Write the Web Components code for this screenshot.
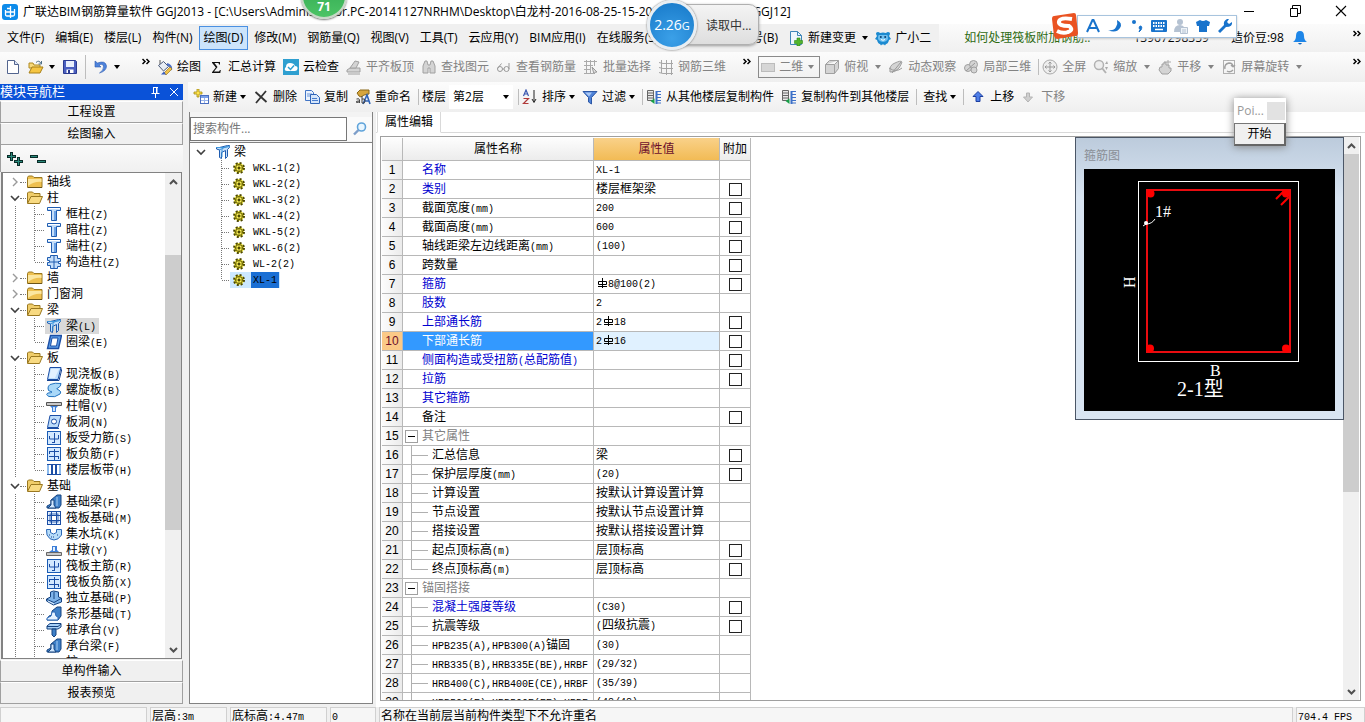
<!DOCTYPE html>
<html lang="zh-CN">
<head>
<meta charset="utf-8">
<title>广联达BIM钢筋算量软件 GGJ2013</title>
<style>
html,body{margin:0;height:100%;overflow:hidden;background:#f0f0f0}
body{font:12px/16px "Open Sans","Noto Sans CJK SC",sans-serif;color:#000;
--ui:"Open Sans","Noto Sans CJK SC",sans-serif;--song:"Liberation Mono","Noto Sans CJK SC",monospace}
</style>
</head>
<body>
<ggj-app></ggj-app>
<script>
const define=(name,css,html)=>customElements.define(name,class extends HTMLElement{
  connectedCallback(){
    if(this.shadowRoot)return;
    this.attachShadow({mode:'open'}).innerHTML=`<style>*{box-sizing:border-box}.m{font-size:10px}${css}</style>${typeof html==='function'?html(this):html}`;
  }
});
/* half-width runs are set at 10px so that each one takes half a CJK cell */
const half=s=>s.replace(/[\x20-\x7e]+/g,m=>`<span class="m">${m}</span>`);

/* ---------- icon set, 16 x 16 grid ---------- */
const B='fill="#c4defa" stroke="#1f5cb0"', G='fill="#d4d4d4" stroke="#a0a0a0"';
const ICONS={
app:'<rect width="16" height="16" rx="3" fill="#0d8bea"/><path d="M8.500 2v12M3 8h10M5 4.500h4M12.500 5v5.500q0 1.500-1.500 1.500H5q-1.500 0-1.500-1.500V6" fill="none" stroke="#fff" stroke-width="1.300"/>',
file:'<path d="M2.500 1.500h7l4 4v9h-11z" fill="#fff" stroke="#53658f"/><path d="M9.500 1.500v4h4" fill="#dde6f8" stroke="#53658f"/>',
open:'<path d="M1 4h4l1 2h6v3H1z" fill="#f7d97a" stroke="#b08a20"/><path d="M1 14l3-6h11l-3 6z" fill="#f5c542" stroke="#a88018"/><path d="M8 3.500q3-3 5 1m.5-2.500v3h-3" fill="none" stroke="#4f7088"/>',
save:'<path d="M1.500 1.500h12l1 1v12h-13z" fill="#4a5fc0" stroke="#2b3a90"/><path d="M4 2h8v6H4z" fill="#e8eefc"/><path d="M4.500 10.500h7V14h-7z" fill="#fff"/><path d="M6 11h2v3H6z" fill="#2b3a90"/>',
undo:'<path d="M2 2v6h6L6 6q4-2 4.500 1.500Q11 11 6.500 14q7-2 7-7Q12.500 1 4.500 4z" fill="#4d83dc" stroke="#2d5bb0" stroke-width=".6"/>',
paint:'<path d="M3 1v5" stroke="#555"/><path d="M1.500 6.500l5-4 5 5-5 4.500z" fill="#e8edf5" stroke="#4c5a78"/><path d="M10 5q5 2 4 6" fill="none" stroke="#4c6fc5" stroke-width="2"/><path d="M7 14l6-6 2 2-6 6z" fill="#f0c24a" stroke="#9a7620" stroke-width=".7"/><path d="M4 15.500l3-3 2 3z" fill="#3b5fc0"/>',
sum:'<path d="M4 3h8v2.500h-1L10.500 4H6.500l3 4-3.500 4.500h5L12 11h.8l-.5 3H4v-.8L7.800 8.500 4 3.800z" fill="#111"/>',
cloud:'<rect width="16" height="16" fill="#2e9fd0"/><path d="M4 12q-3 0-2-3l1-1q0-4 4-4t5 3q3 0 2.500 3-.5 2-2.500 2z" fill="#fff"/><path d="M5 8l2.500 2.500L11 6.500" fill="none" stroke="#2e9fd0" stroke-width="1.500"/>',
slab:`<path d="M1 11l3-2h10v4H1z" ${G}/><path d="M4 9l5-7 4 1-3 6z" ${G}/><path d="M2 15h12" stroke="#a0a0a0"/>`,
find:`<path d="M2 7l2-5h2l1 4h2l1-4h2l2 5v7h-5V9H7v5H2z" ${G}/>`,
glasses:'<circle cx="4" cy="10" r="2.500" fill="none" stroke="#999"/><circle cx="10.500" cy="10" r="2.500" fill="none" stroke="#999"/><path d="M6.500 10h1.500M1.500 9.500l4-5M13 10V4" stroke="#999"/>',
batch:'<path d="M1 2.500h13M1 6.500h9M1 10.500h7M1 14.500h9M3.500 1v14M7.500 1v14M11.500 1v6" stroke="#aaa"/><path d="M9 8l5 5-2 .2L11 15z" fill="#ddd" stroke="#999"/>',
rebar3d:'<path d="M1 3.500l4 1h10M1 8.500l4 1h10M1 13.500l4 1h10M3.500 1v13M8.500 1v15M13.500 1v15" fill="none" stroke="#a6a6a6"/>',
flat:'<rect x="1.500" y="4.500" width="13" height="8" fill="#d6d6d6" stroke="#bcbcbc"/>',
cube:`<path d="M1.500 5.500l4-4h9v8l-4 5h-9zM1.500 5.500h9l4-4M10.500 5.500v9" ${G}/>`,
orbit:`<path d="M2 13Q1 6 7 4q6-3 7-1-1 3-3 6-4 5-9 4z" ${G}/><path d="M1 9q7 5 13 0M4 14L13 3" fill="none" stroke="#999"/>`,
part:`<circle cx="5" cy="9" r="3.500" ${G}/><circle cx="10.500" cy="5.500" r="4" ${G}/><circle cx="11" cy="11" r="3" ${G}/><path d="M3 12l9-8" stroke="#999"/>`,
full:'<circle cx="8" cy="8" r="7" fill="#eee" stroke="#aaa"/><path d="M8 3v10M3 8h10M6.500 4.500L8 3l1.500 1.500M6.500 11.500L8 13l1.500-1.500M4.500 6.500L3 8l1.500 1.500M11.500 6.500L13 8l-1.500 1.500" fill="none" stroke="#999"/>',
zoomi:'<circle cx="6" cy="6" r="4.500" fill="#eee" stroke="#b2b2b2" stroke-width="1.500"/><path d="M9 9l4 5" stroke="#b2b2b2" stroke-width="2"/><path d="M14 2l-2 3h3zM12 8h3l-1.500 3z" fill="#aaa"/>',
hand:`<path d="M3 8h2V5h2V3h2v3h3v3h2v3l-3 3H5l-3-4z" ${G}/><path d="M11 1v5M9 3h5" stroke="#aaa"/>`,
rotate:'<rect x="2.500" y="1.500" width="11" height="13" fill="none" stroke="#b0b0b0"/><path d="M4 10q-1-5 4-6 4 0 4 4m0 0l-2-2m2 2l2-2M12 11q-3 3-6 1" fill="none" stroke="#a0a0a0" stroke-width="1.400"/>',
add:'<path d="M4 0h2v3h3v2H6v3H4V5H1V3h3z" fill="#ffe34d" stroke="#a38a10" stroke-width=".8"/><rect x="7.500" y="6.500" width="8" height="8" fill="#fff" stroke="#4a6ec0"/><path d="M8 7h7v2H8z" fill="#7aa0ea"/><path d="M8 11.500h7M11.500 9v5" stroke="#9bb5ea"/>',
del:'<path d="M2.500 3l11 10M13 2L3 14" stroke="#333" stroke-width="1.800"/>',
copy:'<path d="M1.500 1.500h6l2 2v8h-8z" fill="#eaf2fd" stroke="#4275c5"/><path d="M3 5h5M3 7h5" stroke="#6d97d8"/><path d="M6.500 5.500h6l3 3v6h-9z" fill="#d5e6fb" stroke="#2f64b8"/><path d="M8 9.500h5M8 11.500h6" stroke="#4a7dcc"/>',
rename:'<path d="M2 4l3-3h9v4l-5 1-3 2-2-1z" fill="#d6a53c" stroke="#8a6818"/><path d="M8 15l4-9 3 9m-5-3h4" fill="none" stroke="#2f64b8" stroke-width="1.600"/><path d="M1.500 10q3-1 3 1v3M4 12q-3 0-3 1t3 0M7 7v7M7 10q3-1 3 2t-3 2" fill="none" stroke="#444"/>',
sort:'<path d="M1.500 7L4 1l2.500 6M2.500 5h3" fill="none" stroke="#3a57b0" stroke-width="1.200"/><path d="M1.500 9.500h5l-5 5h5" fill="none" stroke="#b03a3a" stroke-width="1.200"/><path d="M12 1v12m-2-3l2 3.500 2-3.500" fill="none" stroke="#222"/>',
filter:'<path d="M1 2.500h14l-5.500 6V15l-3-2V8.500z" fill="#4f83d8" stroke="#2c57a5"/><path d="M3 3.500h7l-3 4z" fill="#a9c8f5"/>',
from:'<path d="M1.500 1.500h6v10h-6z" fill="#e8e8e8" stroke="#666"/><path d="M2 4h5M2 6.500h5M2 9h5" stroke="#666"/><path d="M11 2.500h4M11 5.500h4M11 8.500h4M11 11.500h4M11 14h4" stroke="#3d70c8"/><path d="M10.500 2v13" stroke="#3d70c8" stroke-width="2"/><path d="M8.500 9.500v5.500L4.500 12z" fill="#18a048"/>',
up:'<path d="M8 2.500l5 5h-3v5H6v-5H3z" fill="#4f7fe8" stroke="#1d3fa0"/>',
down:'<path d="M7 13l-4.500-5h3V4h3v4h3z" fill="#cfcfcf" stroke="#b4b4b4"/>',
change:'<path d="M2.500 1.500h7l4 4v9h-11z" fill="#eef6fc" stroke="#3e85b8"/><path d="M9.500 1.500v4h4" fill="none" stroke="#3e85b8"/><path d="M9 8h3v2.500h2.500v3H12V16H9v-2.500H6.500v-3H9z" fill="#52b52c" stroke="#2d8a18" stroke-width=".6"/>',
robot:'<path d="M1 3q2-2 4 0 3-1 6 0 2-2 4 0 0 2-1 3l2 3-2 1q-1 4-3 4l-1 1.500-1-1H7l-1 1L5 14q-2 0-3-4L0 9l2-3Q1 5 1 3z" fill="#1c8ad0"/><path d="M4 5h8q1 0 1 3t-5 4q-5-1-5-4 0-3 1-3z" fill="#6fc0f0"/><circle cx="5.800" cy="7" r="1" fill="#0b3f70"/><circle cx="10.200" cy="7" r="1" fill="#0b3f70"/><path d="M6 9.500q2 1.500 4 0" fill="none" stroke="#fff"/>',
bell:'<path d="M8 1q4 0 4 5 0 4 3 6H1q3-2 3-6 0-5 4-5z" fill="#1e86e8"/><path d="M6 13h4q-2 3-4 0z" fill="#1669bd"/>',
folder:'<path d="M.5 3.500l1-1.500h4l1.500 1.500h8v10H.5z" fill="#eec050" stroke="#9a7820"/><path d="M1 5h13.500v3Q8 7 1 12z" fill="#fbe6a0"/><path d="M1 13.500h14" stroke="#6b5418"/>',
folderopen:'<path d="M.5 13V3l1-1h4l1.500 1.500h6V6" fill="#f0cd6a" stroke="#9a7820"/><path d="M.5 13.500L4 6.500h11.500l-3 7z" fill="#f8da82" stroke="#9a7820"/>',
col:`<path d="M1.500 1.500h13v3h-4v10h-5v-10h-4z" ${B}/><path d="M2 2h12v1H2z" fill="#fff"/><path d="M9 5v9" stroke="#6ba2e6" stroke-width="2"/>`,
gcol:`<path d="M4.500 1.500h7v3h3v3h-2v2h2v3h-3v2h-7v-3h-3v-3h2v-2h-2v-3h3z" ${B}/><path d="M8 2v12M4 8h9" stroke="#1f5cb0"/>`,
beam:`<path d="M1.500 3.500h3l8-2h2v2l-2 2v7l-2 2v-8l-4 2v6l-2-1V6l-3-1z" ${B}/><path d="M1 3.500h8l6-1M4 6l9-4M7 5v8" fill="none" stroke="#3e96dc"/>`,
ring:'<path d="M4.500 1.500h11l-3 13h-11z" fill="#5a9be6" stroke="#1b4ea5" stroke-width="1.400"/><path d="M6 4h6l-1.500 8H4.500z" fill="#fff" stroke="#1b4ea5"/>',
plate:'<path d="M4 1.500h11l-3 12H1.500z" fill="#bcdcfb" stroke="#1b4ea5"/><path d="M1 14.500h12l3-12" fill="none" stroke="#14408e"/><path d="M5 3h8L9 12H3z" fill="#e3f1ff"/>',
spiral:'<path d="M4 2.500q5-2 11-1 0 3-3 4.500-3 1 1 2 3 2 1 4-5 4-11 2.500-4-2-1-3.500 3 0 4-1-5-1-4-4 0-2 2-3.500z" fill="#a9d8f8" stroke="#2373c0"/>',
cap:'<path d="M.5 4.500h15v3H.5z" fill="#c8c8c8" stroke="#555"/><path d="M4 8h8l-2 2v4H6v-4z" fill="#3d7fd8"/><path d="M7 9h2v4H7z" fill="#cde4ff"/>',
hole:'<path d="M4 1.500h11l-3 12H1.500z" fill="#bcdcfb" stroke="#1b4ea5"/><circle cx="8" cy="7.500" r="2.500" fill="#fff" stroke="#1b4ea5"/><path d="M1 14.500h12" stroke="#1b4ea5"/>',
force:'<rect x="1.500" y="1.500" width="13" height="13" fill="#d3e9ff" stroke="#1b5cb5"/><path d="M8.500 3v10M3.500 6v3h9V5M6 12.500h3" fill="none" stroke="#1b4ea5"/>',
neg:'<rect x="1.500" y="1.500" width="13" height="13" fill="#d3e9ff" stroke="#1b5cb5"/><path d="M8.500 3v11M3 5.500h10M3 10.500h10M3.500 5v3M12.500 10v3" fill="none" stroke="#1b4ea5"/>',
band:'<path d="M1 2.500h14M1 12.500h14" stroke="#1b4ea5"/><path d="M2 3v9M14 3v9" stroke="#8dbbee" stroke-width="2"/><path d="M6 3v9M10 3v9" stroke="#1b4ea5" stroke-width="2"/>',
fbeam:'<path d="M1 12l4-2V6l6-5h4v10l-2 3H1z" fill="#3e80c8" stroke="#15427f"/><path d="M5 6h3v5l2 3H2l3-3z" fill="#d3e9ff" stroke="#15427f"/><path d="M11 3v9" stroke="#a8d0f7"/>',
raft:'<rect x="1.500" y="1.500" width="13" height="13" fill="#e0efff" stroke="#1b4ea5"/><path d="M5.500 1v14M10.500 1v14M1 5.500h14M1 10.500h14" stroke="#1b4ea5"/><rect x="4" y="4" width="8" height="8" fill="none" stroke="#1b4ea5" stroke-width=".8"/><path d="M6 6h4v4H6z" fill="#fff"/>',
pit:'<path d="M.5 3.500h4v3q3 3 6 0v-3h5V9q-3 5-7.500 5T1 9z" fill="#b7ddfa" stroke="#2a68b8"/><path d="M3 9h1m3 2h1m3-2h1M5 11h1" stroke="#14408e"/>',
pier:'<path d="M.5 10.500h15v3H.5z" fill="#c8c8c8" stroke="#666"/><path d="M3 10l3-2V4h5v4l2 2z" fill="#3d7fd8"/><path d="M7 5h2v4H7z" fill="#e4f1ff"/>',
foot:'<path d="M.5 9l4-2V2l3-1 5 1v5l3 1v4l-8 3-7-4z" fill="#7fb4ea" stroke="#15427f"/><path d="M1 9.500l7 3 7-4M8 2v7" fill="none" stroke="#15427f"/><path d="M2 11l6 3" stroke="#e4f1ff"/>',
strip:'<path d="M1 14l2-4 3-1V5l5-4h4v9l-3 4z" fill="#3e80c8" stroke="#15427f"/><path d="M6 6h3l1 4 2 1v3H1v-2l4-2z" fill="#e4f1ff" stroke="#2a68b8"/>',
pile:'<path d="M1 4l3-2.500h11V5l-3 2H1z" fill="#a8d0f7" stroke="#15427f"/><path d="M6 7h4v6l-2 2-2-2z" fill="#3e80c8" stroke="#15427f"/><path d="M1 4.500h11L15 2" fill="none" stroke="#15427f"/>',
gear:'<circle cx="8" cy="8" r="5" fill="#f4ec3c" stroke="#4c4700" stroke-width="2" stroke-dasharray="2 1.927"/><circle cx="8" cy="8" r="3.500" fill="#fff45a" stroke="#5a5400"/><path d="M5 8h6M8 5v6" stroke="#5a5400" stroke-width=".7"/><circle cx="8" cy="8" r="1.200" fill="#4c4700"/>',
search:'<circle cx="9.500" cy="6" r="4" fill="#e9f6ff" stroke="#5fa3da" stroke-width="1.600"/><path d="M6.500 9L2 13.500" stroke="#7d9ec9" stroke-width="2.400"/>',
expand:'<path d="M0 5.500h9M4.500 1v9M7 10.500h9M11.500 6v9" stroke="#0a2c28" stroke-width="3"/><path d="M1 5.500h7M4.500 2v7M8 10.500h7M11.500 7v7" stroke="#2a8a7c"/>',
collapse:'<path d="M0 5.500h8M7 10.500h9" stroke="#0a2c28" stroke-width="3"/><path d="M1 5.500h6M8 10.500h7" stroke="#2a8a7c"/>',
pin:'<path d="M5 3.500h5M5.500 4v5M9 4v5M3.500 9.500h8M7.500 10v4" stroke="#fff" fill="none"/><path d="M8.500 4v5" stroke="#fff"/>',
x:'<path d="M4 4l8 8M12 4l-8 8" stroke="#fff"/>',
min:'<path d="M3 8.500h10" stroke="#000"/>',
restore:'<path d="M3.500 5.500h7v8h-7zM5.500 5v-2.500h8v8H11" fill="none" stroke="#000"/>',
close:'<path d="M3 3l10 10M13 3L3 13" stroke="#000" stroke-width="1.100"/>',
sogouA:'<path d="M2 14L7.500 2h1L14 14M4 10h8" fill="none" stroke="#1873cc" stroke-width="2"/>',
moon:'<path d="M10 2q6 3 3 8-4 6-12 2 6 1 8-3 2-3 1-7z" fill="#1873cc"/>',
comma:'<circle cx="5" cy="4" r="2" fill="#1873cc"/><path d="M11 8q3 0 1 4l-2 2q2-3 0-4z" fill="#1873cc" stroke="#1873cc"/>',
keys:'<rect y="2" width="16" height="12" rx="1" fill="#1873cc"/><path d="M2 5h12M2 8h12" stroke="#fff" stroke-width="2" stroke-dasharray="1.500 1"/><path d="M4 11.500h8" stroke="#fff" stroke-width="1.500"/>',
person:'<circle cx="7" cy="4" r="3" fill="#b5c2d2"/><path d="M1 14q0-7 6-7 3 0 5 3v4z" fill="#b5c2d2"/><path d="M7.500 9.500h7v6h-7z" fill="#eef3f8" stroke="#b5c2d2"/><path d="M9 12h4M9 14h4" stroke="#b5c2d2"/>',
shirt:'<path d="M1 4l4-2q3 2 6 0l4 2-1 4h-2v6H4V8H2z" fill="#1873cc"/>',
wrench:'<path d="M3 15l-2-2 6-6q-1-4 3-6l2 0-2 3 2 2 3-2q1 5-6 5z" fill="#1873cc"/>'
};
define('ui-icon',':host{display:block;flex:none;width:16px;height:16px}svg{display:block;width:100%;height:100%}',
 e=>`<svg viewBox="0 0 16 16" aria-hidden="true">${ICONS[e.getAttribute('name')]||''}</svg>`);
define('drop-arrow',':host{display:block;flex:none;width:6px;height:4px}svg{display:block}','<svg width="6" height="4" aria-hidden="true"><path d="M0 0h6L3 4z" fill="currentColor"/></svg>');
define('more-mark',':host{display:block;flex:none;width:8px;height:7px;align-self:flex-start;margin-top:6px}svg{display:block}','<svg width="8" height="7" aria-hidden="true"><path d="M.5 1L3 3.500.5 6M4.500 1L7 3.500 4.500 6" fill="none" stroke="#000" stroke-width="1.500"/></svg>');
define('tool-sep',':host{display:block;flex:none;width:1px;height:16px;background:#bdbdbd}','');

define('tool-button',`:host{display:block;flex:none}
button{display:flex;align-items:center;gap:4px;border:0;padding:0;margin:0;background:none;font:12px/20px var(--ui);color:#000;white-space:nowrap}
button:disabled{color:#838383}drop-arrow{margin-left:var(--arrow,-1px)}`,
e=>{const i=e.getAttribute('icon'),l=e.getAttribute('label')||'';
return `<button ${e.hasAttribute('off')?'disabled':''} aria-label="${l||e.getAttribute('hint')}">${i?`<ui-icon name="${i}"></ui-icon>`:''}${l?`<span>${l}</span>`:''}${e.hasAttribute('menu')?'<drop-arrow></drop-arrow>':''}</button>`});

define('scroll-bar',`:host{display:flex;flex-direction:column;flex:none;width:16px;background:#f0f0f0}
.arrow{height:17px;flex:none;display:flex;align-items:center;justify-content:center}
.thumb{background:#cdcdcd}`,
e=>{const [a,b,c]=e.getAttribute('parts').split(' ');
const arrow=d=>`<div class="arrow"><svg width="9" height="6"><path d="${d}" fill="none" stroke="#505050" stroke-width="2"/></svg></div>`;
return `${arrow('M1 5l3.500-3.500L8 5')}<div style="flex:${a} 0 0"></div><div class="thumb" style="flex:${b} 0 0"></div><div style="flex:${c} 0 0"></div>${arrow('M1 1l3.500 3.500L8 1')}`});

/* ---------- window chrome ---------- */
define('title-bar',`:host{display:flex;align-items:center;height:24px;flex:none;background:#fff;padding:0 16px 0 2px;white-space:nowrap}
h1{font:12px/16px var(--ui);margin:0 auto 0 5px}
.win{display:flex;gap:30px;margin-bottom:3px}button{border:0;padding:0;background:none}`,
`<ui-icon name="app"></ui-icon><h1>广联达BIM钢筋算量软件 GGJ2013 - [C:\\Users\\Administrator.PC-20141127NRHM\\Desktop\\白龙村-2016-08-25-15-20-10-32 (2016钢筋).GGJ12]</h1>
<div class="win"><button aria-label="最小化"><ui-icon name="min"></ui-icon></button><button aria-label="还原"><ui-icon name="restore"></ui-icon></button><button aria-label="关闭"><ui-icon name="close"></ui-icon></button></div>`);

const MENUS=['文件(F)','编辑(E)','楼层(L)','构件(N)','绘图(D)','修改(M)','钢筋量(Q)','视图(V)','工具(T)','云应用(Y)','BIM应用(I)','在线服务(S)','帮助(H)','版本号(B)'];
define('menu-bar',`:host{display:flex;align-items:center;height:28px;flex:none;background:#f0f0f0;padding-left:2px}
nav{display:flex;gap:1px}nav button{border:1px solid transparent;background:none;padding:0 4px;height:24px;font:12px/20px var(--ui);white-space:nowrap;color:#000}
nav button.on{background:#cce4fb;border-color:#4a90e2}nav button:last-child{margin-left:7px}
tool-button{margin-left:5px;--arrow:2px}tool-button+tool-button{margin-left:7px}
.info{flex:1;display:flex;align-items:center;align-self:stretch;margin-left:8px;padding:0 4px 0 25px;background:linear-gradient(#fbfbfb,#f0f0f0);white-space:nowrap}
a{color:#2e6b12;text-decoration:none}.tel{margin-left:43px}.bean{margin-left:22px}.info ui-icon{margin-left:8px}more-mark{margin-left:auto}`,
`<nav>${MENUS.map(m=>`<button${m=='绘图(D)'?' class="on"':''}>${m}</button>`).join('')}</nav>
<tool-button icon="change" label="新建变更" menu></tool-button><tool-button icon="robot" label="广小二"></tool-button>
<div class="info"><a href="#">如何处理筏板附加钢筋..</a><span class="tel">13967298359</span><span class="bean">造价豆:98</span><ui-icon name="bell"></ui-icon><more-mark></more-mark></div>`);

const tb=(icon,label,o='off')=>`<tool-button ${icon?`icon="${icon}"`:''} label="${label}" ${o}></tool-button>`;
define('main-tools',`:host{display:flex;align-items:center;gap:7px;height:30px;flex:none;padding:0 4px 0 5px;background:linear-gradient(#fcfcfc,#efefef);--arrow:3px}
.std{display:flex;align-items:center;gap:7px;width:145px;--arrow:1px}
.std more-mark{margin-left:auto}.std,.view{align-self:stretch}
.view{display:flex;align-items:center;margin:0 -3px 0 0}
.box{display:flex;align-items:center;border:1px solid #8a8a8a;height:22px;width:62px;padding:0 5px 0 1px;color:#838383}
select{appearance:none;border:0;background:none;padding:0;margin:0 auto 0 3px;font:12px/18px var(--ui);color:#838383;width:26px}
.more{margin:6px 0 0 10px}.last{margin-left:auto}tool-sep{margin-right:-4px}.std tool-sep{height:24px;margin:0}`,
`<div class="std"><tool-button icon="file" hint="新建"></tool-button><tool-button icon="open" hint="打开" menu></tool-button><tool-button icon="save" hint="保存"></tool-button><tool-sep></tool-sep><tool-button icon="undo" hint="撤销" menu></tool-button><more-mark></more-mark></div>
${tb('paint','绘图','')}${tb('sum','汇总计算','')}${tb('cloud','云检查','')}${tb('slab','平齐板顶')}${tb('find','查找图元')}${tb('glasses','查看钢筋量')}${tb('batch','批量选择')}${tb('rebar3d','钢筋三维')}
<more-mark class="more"></more-mark><div class="view"><div class="box"><ui-icon name="flat"></ui-icon><select aria-label="视图模式"><option>二维</option></select><drop-arrow></drop-arrow></div></div>
${tb('cube','俯视','off menu')}${tb('orbit','动态观察')}${tb('part','局部三维')}<tool-sep></tool-sep>${tb('full','全屏')}${tb('zoomi','缩放','off menu')}${tb('hand','平移','off menu')}${tb('rotate','屏幕旋转','off menu')}<more-mark class="last"></more-mark>`);

define('edit-tools',`:host{display:flex;align-items:center;gap:7px;height:30px;flex:none;padding-left:5px;background:linear-gradient(#fcfcfc,#efefef)}
tool-sep{margin-right:-4px}.wide{margin-right:-1px}label{margin-right:-4px;white-space:nowrap}
.box{display:flex;align-items:center;width:64px;height:24px;background:#fff;padding:0 4px;margin-right:-2px}
select{appearance:none;border:0;background:none;padding:0;font:12px/20px var(--ui);flex:1;min-width:0}`,
`${tb('add','新建','menu')}${tb('del','删除','')}${tb('copy','复制','')}${tb('rename','重命名','')}<tool-sep></tool-sep><label for="f">楼层</label><div class="box"><select id="f"><option>第2层</option></select><drop-arrow></drop-arrow></div>
<tool-sep></tool-sep>${tb('sort','排序','menu')}${tb('filter','过滤','menu')}<tool-sep></tool-sep>${tb('from','从其他楼层复制构件','')}${tb('from','复制构件到其他楼层','')}<tool-sep class="wide"></tool-sep>${tb('','查找','menu')}<tool-sep class="wide"></tool-sep>${tb('up','上移','')}${tb('down','下移')}`);

/* ---------- left navigation ---------- */
const CHEV={open:'<svg width="10" height="16"><path d="M1 6l4 4 4-4" fill="none" stroke="#404040" stroke-width="1.600"/></svg>',shut:'<svg width="10" height="16"><path d="M3 4l4 4-4 4" fill="none" stroke="#9a9a9a" stroke-width="1.400"/></svg>'};
const NAV=[['轴线'],['柱',['col','框柱(Z)'],['col','暗柱(Z)'],['col','端柱(Z)'],['gcol','构造柱(Z)']],['墙'],['门窗洞'],
['梁',['beam','梁(L)'],['ring','圈梁(E)']],
['板',['plate','现浇板(B)'],['spiral','螺旋板(B)'],['cap','柱帽(V)'],['hole','板洞(N)'],['force','板受力筋(S)'],['neg','板负筋(F)'],['band','楼层板带(H)']],
['基础',['fbeam','基础梁(F)'],['raft','筏板基础(M)'],['pit','集水坑(K)'],['pier','柱墩(Y)'],['force','筏板主筋(R)'],['neg','筏板负筋(X)'],['foot','独立基础(P)'],['strip','条形基础(T)'],['pile','桩承台(V)'],['fbeam','承台梁(F)'],['pier','桩(U)']]];
const navRows=NAV.map(([t,...k])=>`<li role="treeitem" class="g">${k.length?CHEV.open:CHEV.shut}<i></i><ui-icon name="${k.length?'folderopen':'folder'}"></ui-icon><span>${t}</span></li>`+
k.map(([ic,n],j)=>`<li role="treeitem"><svg class="guide" width="42" height="16"><path d="M12.500 0v16M31.500 0v${j==k.length-1&&n!='桩(U)'?8:16}M32 8.500h10" stroke="#777" stroke-dasharray="1 1"/></svg><div class="${n=='梁(L)'?'sel':'it'}"><ui-icon name="${ic}"></ui-icon><div class="t">${half(n)}</div></div></li>`).join('')).join('');
define('module-nav',`:host{display:flex;flex-direction:column;width:184px;flex:none;padding:2px 1px 3px 0}
header{display:flex;align-items:center;height:16px;flex:none;background:#0a52d8;color:#fff;font:13px/18px var(--song);margin-bottom:1px}
h2{font:inherit;margin:0 auto 0 0;padding-top:1px}header ui-icon+ui-icon{margin:0 1px 0 2px}
.sec{height:22px;flex:none;border:1px solid #a0a0a0;border-top-color:#fff;background:#f0f0f0;font:12px/18px var(--song);padding:2px 0 0;color:#000}
.acts{display:flex;align-items:center;gap:7px;height:27px;flex:none;padding-left:6px;background:linear-gradient(#fafafa,#f0f0f0);border-left:1px solid #a0a0a0}
.acts button{border:0;background:none;padding:0;display:block}
.tree{flex:1;min-height:0;display:flex;border:1px solid #828282;margin-right:1px;background:#fff;border-left-width:2px;margin-left:1px;margin-bottom:1px}
ul{list-style:none;margin:0;padding:1px 0 0;flex:1;min-width:0;overflow:hidden;font:12px/18px var(--song)}
li{display:flex;align-items:center;height:16px;white-space:nowrap}.g>svg{margin-left:7px}.g i{width:6px;border-top:1px dotted #777;margin-right:1px}.g>span{margin-left:4px;height:16px}
.it,.sel{display:flex;height:16px;padding:0 3px 0 1px}.sel{background:#d9d9d9}.t{margin-left:4px}svg{display:block;flex:none}`,
`<header><h2>模块导航栏</h2><ui-icon name="pin"></ui-icon><ui-icon name="x"></ui-icon></header>
<button class="sec">工程设置</button><button class="sec">绘图输入</button>
<div class="acts"><button aria-label="全部展开"><ui-icon name="expand"></ui-icon></button><button aria-label="全部折叠"><ui-icon name="collapse"></ui-icon></button></div>
<div class="tree"><ul role="tree">${navRows}</ul><scroll-bar parts="65 276 111"></scroll-bar></div>
<button class="sec">单构件输入</button><button class="sec">报表预览</button>`);

/* ---------- component list ---------- */
const PARTS=['WKL-1(2)','WKL-2(2)','WKL-3(2)','WKL-4(2)','WKL-5(2)','WKL-6(2)','WL-2(2)','XL-1'];
define('component-list',`:host{display:flex;flex-direction:column;width:184px;flex:none;border:1px solid #828282;border-top:0;margin-bottom:3px;margin-left:1px;background:#fff}
form{display:flex;height:31px;flex:none;padding:5px 0 1px;background:#f3f3f3;border-bottom:1px solid #828282}
input{flex:1;min-width:0;border:1px solid #777;padding:0 2px;font:12px/16px var(--ui);color:#000;background:#fff}input::placeholder{color:#777}
form button{width:25px;border:0;padding:0 0 0 5px;background:#fafafa}
ul{list-style:none;margin:0;padding:1px 0 0;font:12px/18px var(--song)}li{display:flex;height:16px;align-items:center}svg{display:block;flex:none}
.root svg{margin:0 9px 0 6px}.root span{margin-left:3px;height:16px}li b{font-weight:400;margin-left:4px;padding:0 2px;height:16px}
.box{display:flex;padding:0 1px}.sel{background:#cce8ff}.sel b{background:#1a6fd4}`,
`<form><input placeholder="搜索构件..." aria-label="搜索构件"><button type="button" aria-label="搜索"><ui-icon name="search"></ui-icon></button></form>
<ul role="tree"><li class="root" role="treeitem">${CHEV.open}<ui-icon name="beam"></ui-icon><span>梁</span></li>${PARTS.map((p,i)=>`<li role="treeitem"><svg width="40" height="16"><path d="M31.500 0v${i==7?8:16}M32 8.500h8" stroke="#777" stroke-dasharray="1 1"/></svg><div class="box${i==7?' sel':''}"><ui-icon name="gear"></ui-icon><b class="m">${p}</b></div></li>`).join('')}</ul>`);

/* ---------- property table ---------- */
const BAR='<svg class="rb" width="12" height="10" role="img" aria-label="三级钢"><path d="M6.500 0v10M2.500 3.500h8v3h-8zM2 8.500h9" fill="none" stroke="#000"/></svg>';
/* flags: b blue, c check box, g group, s sub-item, e last sub-item, h highlighted; ~ stands for the rebar grade sign */
const ROWS=[['名称','XL-1','b'],['类别','楼层框架梁','bc'],['截面宽度(mm)','200','c'],['截面高度(mm)','600','c'],['轴线距梁左边线距离(mm)','(100)','c'],['跨数量','','c'],['箍筋','~8@100(2)','bc'],['肢数','2','b'],['上部通长筋','2~18','bc'],['下部通长筋','2~16','hc'],['侧面构造或受扭筋(总配筋值)','','bc'],['拉筋','','bc'],['其它箍筋','','b'],['备注','','c'],['其它属性','','g'],['汇总信息','梁','sc'],['保护层厚度(mm)','(20)','sc'],['计算设置','按默认计算设置计算','s'],['节点设置','按默认节点设置计算','s'],['搭接设置','按默认搭接设置计算','s'],['起点顶标高(m)','层顶标高','sc'],['终点顶标高(m)','层顶标高','ec'],['锚固搭接','','g'],['混凝土强度等级','(C30)','sbc'],['抗震等级','(四级抗震)','sc'],['HPB235(A),HPB300(A)锚固','(30)','s'],['HRB335(B),HRB335E(BE),HRBF','(29/32)','s'],['HRB400(C),HRB400E(CE),HRBF','(35/39)','s'],['HRB500(E),HRB500E(EE),HRBF','(48/48)','s']];
define('property-table',`:host{display:block;flex:none;overflow:hidden;width:370px;padding:1px 0 0 1px}
table{table-layout:fixed;width:369px;border-spacing:0;font:12px/16px var(--song)}
th,td{padding:0;border-right:1px solid #b8b8b8;border-bottom:1px solid #b8b8b8;height:19px;font-weight:400;overflow:hidden;white-space:nowrap;text-align:left}
thead th{height:23px;padding-top:2px;background:linear-gradient(#fdfdfd,#ececec);text-align:center}thead th.v{background:linear-gradient(#f9d189,#f2bb55);color:#6b0f2b}
tbody th{background:linear-gradient(90deg,#fcfcfc,#ebebeb);text-align:center;font:12px/16px "Liberation Sans",sans-serif}
.n{display:flex;align-items:center;height:18px;padding-left:19px}.n svg{flex:none}.n>div{padding-top:2px}.grp{padding-left:2px;color:#808080}.sub{padding-left:8px}
.grp button{width:13px;height:13px;border:1px solid #a0a0a0;background:#fff;padding:0;margin-right:4px;display:flex;align-items:center;justify-content:center}
.grp button::before{content:"";width:7px;height:1px;background:#000}
.b{color:#0000d0}.h{background:#3399ff;color:#fff}.h+td{background:#e0f1ff}tr.hl th{background:#fbc987;color:#6b0f2b}
td.v{padding:1px 0 0 2px;line-height:14px}td.c{text-align:center}.rb{vertical-align:-1px}
input{appearance:none;width:13px;height:13px;border:1px solid #222;background:#fff;margin:0;display:block;margin:0 auto}`,
`<table><colgroup><col style="width:21px"><col style="width:191px"><col style="width:126px"><col style="width:31px"></colgroup><thead><tr><th></th><th>属性名称</th><th class="v">属性值</th><th>附加</th></tr></thead><tbody>${ROWS.map(([n,v,f],i)=>{
const has=x=>f.includes(x),sub=has('s')||has('e');
const lead=has('g')?'<button aria-label="折叠"></button>':sub?`<svg width="21" height="18"><path d="M.5 0v${has('e')?9:18}M0 9.500h17" stroke="#b0b0b0"/></svg>`:'';
return `<tr${has('h')?' class="hl"':''}><th>${i+1}</th><td class="${has('h')?'h':has('b')?'b':''}"><div class="n ${has('g')?'grp':sub?'sub':''}">${lead}<div>${half(n)}</div></div></td><td class="v">${v.split('~').map(half).join(BAR)}</td><td class="c">${has('c')?`<input type="checkbox" aria-label="${n} 附加">`:''}</td></tr>`}).join('')}</tbody></table>`);

define('stirrup-view',`:host{display:flex;flex-direction:column;flex:none;align-self:flex-start;width:269px;border:1px solid #4b5666;background:linear-gradient(#bccbdc,#d9e5f2 60px);padding:9px 8px 8px;color:#8a8f96}
h2{font:12px/18px var(--ui);margin:0 0 4px}svg{display:block;width:100%;background:#000;font-family:"Liberation Serif","Noto Sans CJK SC",serif}`,
`<h2>箍筋图</h2><svg viewBox="0 0 251 242"><rect x="54.500" y="12.500" width="160" height="180" fill="none" stroke="#fff"/><rect x="63" y="21" width="143" height="162" fill="none" stroke="#e80c10" stroke-width="2"/><g fill="#f00"><circle cx="66.500" cy="24.500" r="4"/><circle cx="202" cy="24.500" r="4"/><circle cx="66" cy="179.500" r="4"/><circle cx="202" cy="179.500" r="4"/></g><path d="M192 30l8-8M197 36l8-8" stroke="#f00" stroke-width="2"/><path d="M59 57l3-2q6 0 9-5" fill="none" stroke="#fff"/><circle cx="62" cy="54" r="2" fill="#fff"/><g fill="#fff"><text x="71" y="48" font-size="16">1#</text><text x="126" y="207" font-size="16">B</text><text transform="translate(51 119) rotate(-90)" font-size="16">H</text><text x="93" y="227" font-size="20">2-1型</text></g></svg>`);

define('property-panel',`:host{flex:1;min-width:0;display:flex;flex-direction:column;background:#fff;margin-left:3px}
.tabs{height:21px;flex:none;border-bottom:1px solid #d9d9d9;padding-left:1px}
.tabs button{height:21px;border:1px solid #d9d9d9;border-bottom-color:#fff;border-top:0;background:#fff;padding:0 7px;font:12px/18px var(--ui);color:#000;margin:0}
.body{flex:1;min-height:0;display:flex;overflow:hidden;margin:3px 4px 6px;border:1px solid #a0a0a0}
stirrup-view{margin:0 -1px 0 auto;z-index:1}scroll-bar{align-self:stretch;margin-right:1px}`,
`<div class="tabs"><button>属性编辑</button></div><div class="body"><property-table></property-table><stirrup-view></stirrup-view><scroll-bar parts="0 338 191"></scroll-bar></div>`);

define('status-bar',`:host{display:flex;gap:3px;height:15px;flex:none;overflow:hidden;font:12px/16px var(--song);white-space:nowrap}
.c{flex:none;height:22px;border:1px solid #d0d0d0;background:#f6f6f6;padding:1px}.msg{flex:1}`,
`<div class="c" style="width:147px"></div><div class="c" style="width:77px">${half('层高:3m')}</div><div class="c" style="width:97px">${half('底标高:4.47m')}</div><div class="c" style="width:46px">${half('0')}</div><div class="c msg">名称在当前层当前构件类型下不允许重名</div><div class="c" style="width:69px">${half('704.4 FPS')}</div>`);

/* ---------- floating desktop widgets ---------- */
define('speed-ball',`:host{position:absolute;left:647px;top:0;display:flex}
.ball{width:50px;height:50px;border-radius:50%;border:3px solid #e9eef2;background:radial-gradient(circle at 50% 80%,#3ba0e8,#1678c8);color:#fff;font:14px/44px "Open Sans",sans-serif;text-align:center;box-shadow:0 0 2px #555;z-index:1;white-space:nowrap}
small{font-size:11px}.tip{margin:4px 0 0 -28px;width:90px;height:41px;padding-left:36px;border-radius:10px;border:1px solid #b0b0b0;background:linear-gradient(#f4f4f4,#dedede);font:12px/42px var(--ui);color:#333;box-shadow:0 1px 3px #999}`,
`<div class="ball">2.26<small>G</small></div><div class="tip">读取中...</div>`);
define('green-badge',`:host{position:absolute;left:301px;top:-27px;width:46px;height:46px;border-radius:50%;border:2px solid #c8d8c8;background:linear-gradient(#2ca34e,#4cc465);box-shadow:0 1px 2px #777;color:#fff;font:700 12px/14px "Open Sans",sans-serif;text-align:center;padding-top:25px;box-sizing:border-box}`,'71');
define('ime-bar',`:host{position:absolute;right:128px;top:12px;display:flex;align-items:center}
.logo{width:28px;height:28px;display:block;margin-right:-2px;z-index:1}.bar{display:flex;align-items:center;gap:6px;height:23px;border:1px solid #a8c4de;background:#fff;padding:0 3px 0 7px;box-shadow:0 1px 2px #ccc}`,
`<svg class="logo" viewBox="0 0 28 28"><path d="M3 4L23 1q2 0 2 2l2 18q0 3-3 3L6 27q-2 0-3-3L1 7q0-3 2-3z" fill="#ea5322"/><path d="M21 7Q9 5 8 9.500T18 14q5 4-1 6-5 2-11-1" fill="none" stroke="#fff" stroke-width="4"/></svg><div class="bar">${['sogouA','moon','comma','keys','person','shirt','wrench'].map(n=>`<ui-icon name="${n}"></ui-icon>`).join('')}</div>`);
define('start-popup',`:host{position:absolute;right:79px;top:98px;width:52px;box-shadow:0 1px 8px #888;background:#fff;z-index:2}
header{display:flex;align-items:center;justify-content:space-between;height:25px;padding:0 1px 0 3px;color:#999}i{width:18px;height:18px;background:#e2e2e2}
button{display:block;width:100%;height:23px;padding:0;background:#f0f0f0;border:1px solid #777;border-right:2px solid #666;border-bottom:2px solid #666;font:12px/18px var(--ui);color:#000}`,
`<header>Poi...<i></i></header><button>开始</button>`);

define('ggj-app',`:host{display:flex;flex-direction:column;height:100vh;position:relative;overflow:hidden;background:#f0f0f0}
main{flex:1;min-height:0;display:flex}.work{flex:1;min-width:0;display:flex;flex-direction:column;margin-left:4px}.cols{flex:1;min-height:0;display:flex}`,
`<title-bar></title-bar><menu-bar></menu-bar><main-tools></main-tools><main><module-nav></module-nav><div class="work"><edit-tools></edit-tools><div class="cols"><component-list></component-list><property-panel></property-panel></div></div></main><status-bar></status-bar><green-badge></green-badge><speed-ball></speed-ball><ime-bar></ime-bar><start-popup></start-popup>`);
</script>
</body>
</html>
